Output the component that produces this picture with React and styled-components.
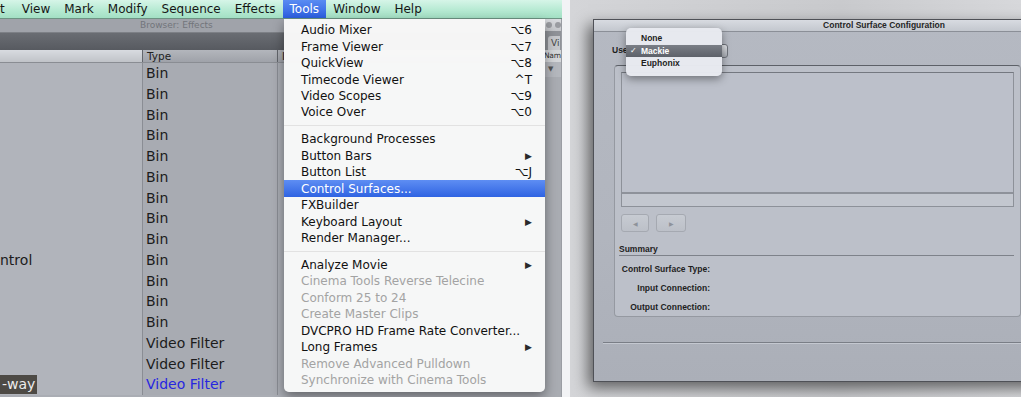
import styled, { createGlobalStyle } from 'styled-components';

const GlobalStyle = createGlobalStyle`
  html, body { margin: 0; padding: 0; background: #f2f3f5; }
  body { font-family: "DejaVu Sans", sans-serif; }
`;

const menuTitles = ['t', 'View', 'Mark', 'Modify', 'Sequence', 'Effects', 'Tools', 'Window', 'Help'];

const toolsMenu = [
  { label: 'Audio Mixer', key: '⌥6' },
  { label: 'Frame Viewer', key: '⌥7' },
  { label: 'QuickView', key: '⌥8' },
  { label: 'Timecode Viewer', key: '^T' },
  { label: 'Video Scopes', key: '⌥9' },
  { label: 'Voice Over', key: '⌥0' },
  { sep: true },
  { label: 'Background Processes' },
  { label: 'Button Bars', sub: true },
  { label: 'Button List', key: '⌥J' },
  { label: 'Control Surfaces...', active: true },
  { label: 'FXBuilder' },
  { label: 'Keyboard Layout', sub: true },
  { label: 'Render Manager...' },
  { sep: true },
  { label: 'Analyze Movie', sub: true },
  { label: 'Cinema Tools Reverse Telecine', off: true },
  { label: 'Conform 25 to 24', off: true },
  { label: 'Create Master Clips', off: true },
  { label: 'DVCPRO HD Frame Rate Converter...' },
  { label: 'Long Frames', sub: true },
  { label: 'Remove Advanced Pulldown', off: true },
  { label: 'Synchronize with Cinema Tools', off: true },
];

const rows = [
  ...Array(13).fill('Bin').map((t, i) => ({ name: i === 9 ? 'ntrol' : '', type: t })),
  { name: '', type: 'Video Filter' },
  { name: '', type: 'Video Filter' },
  { name: '-way', type: 'Video Filter', picked: true },
];

const summary = ['Control Surface Type:', 'Input Connection:', 'Output Connection:'];

const App = () => (
  <>
    <GlobalStyle />
    <Page>
      <LeftShot>
        <MenuBar>
          {menuTitles.map((t) => (
            <MenuTitle key={t} open={t === 'Tools'} first={t === 't'}>{t}</MenuTitle>
          ))}
        </MenuBar>
        <Desk>
          <BrowserWindow>
            <BrowserTitle>Browser: Effects</BrowserTitle>
            <TabStrip />
            <HeaderRow>
              <HeadCell />
              <HeadCell dark>Type</HeadCell>
              <HeadCell dark>I</HeadCell>
            </HeaderRow>
            {rows.map((r, i) => (
              <Row key={i}>
                <NameCell>{r.name && <NameText picked={r.picked}>{r.name}</NameText>}</NameCell>
                <TypeCell picked={r.picked}>{r.type}</TypeCell>
                <RestCell />
              </Row>
            ))}
          </BrowserWindow>
          <SideWindow>
            <SideTitle><Dot /><Dot /></SideTitle>
            <SideTabs><SideTab>Vi</SideTab></SideTabs>
            <SideHead>Nam</SideHead>
            <SideRow>▼</SideRow>
            <SideFill />
          </SideWindow>
        </Desk>

        <Dropdown>
          {toolsMenu.map((m, i) =>
            m.sep ? (
              <Separator key={i} />
            ) : (
              <MenuItem key={i} active={m.active} off={m.off}>
                <span>{m.label}</span>
                {m.key && <Shortcut>{m.key}</Shortcut>}
                {m.sub && <SubArrow>▶</SubArrow>}
              </MenuItem>
            )
          )}
        </Dropdown>
      </LeftShot>

      <RightShot>
        <Dialog>
          <DialogTitle>Control Surface Configuration</DialogTitle>
          <PopupRow>
            <SmallLabel>Use:</SmallLabel>
            <PopupButton />
          </PopupRow>
          <GroupBox>
            <ListBox>
              <ListArea />
              <ListStrip />
            </ListBox>
            <ArrowRow>
              <ArrowButton w={28}>◀</ArrowButton>
              <ArrowButton w={30}>▶</ArrowButton>
            </ArrowRow>
            <SummaryHead>Summary</SummaryHead>
            <Fields>
              {summary.map((s) => (
                <Field key={s}><FieldLabel>{s}</FieldLabel></Field>
              ))}
            </Fields>
          </GroupBox>
          <Divider />
        </Dialog>

        <PopupMenu>
          <PopupItem>None</PopupItem>
          <PopupItem selected><Check>✓</Check>Mackie</PopupItem>
          <PopupItem>Euphonix</PopupItem>
        </PopupMenu>
      </RightShot>
    </Page>
  </>
);

const Page = styled.div`
  display: flex;
  gap: 8px;
  width: 1021px;
  height: 397px;
  overflow: hidden;
  background: #f2f3f5;
`;

/* ---------- left: Final Cut menu ---------- */

const LeftShot = styled.div`
  position: relative;
  width: 562px;
  flex-shrink: 0;
  display: flex;
  flex-direction: column;
  overflow: hidden;
`;

const MenuBar = styled.div`
  height: 19px;
  box-sizing: border-box;
  display: flex;
  background: linear-gradient(#d6f5e8, #b4e9d1 60%, #a3e0c4);
  border-bottom: 1px solid #6d9383;
  font-size: 12px;
  color: #161616;
`;

const MenuTitle = styled.div`
  display: flex;
  align-items: center;
  padding-left: ${(p) => (p.first ? '0' : '7px')};
  padding-right: ${(p) => (p.first ? '10px' : '7px')};
  background: ${(p) => (p.open ? 'linear-gradient(#5a8cf2, #2c5fe0)' : 'transparent')};
  color: ${(p) => (p.open ? '#fff' : 'inherit')};
`;

const Desk = styled.div`
  flex: 1;
  display: flex;
  min-height: 0;
`;

const BrowserWindow = styled.div`
  width: 545px;
  display: flex;
  flex-direction: column;
  background: #aaadb4;
`;

const BrowserTitle = styled.div`
  height: 13px;
  padding-left: 140px;
  font-size: 9px;
  line-height: 13px;
  color: #72757b;
  background: #a0a3aa;
`;

const TabStrip = styled.div`
  height: 18px;
  background: linear-gradient(#6a6d73, #575a60);
  border-top: 1px solid #7d8086;
  box-sizing: border-box;
`;

const HeaderRow = styled.div`
  height: 13px;
  display: grid;
  grid-template-columns: 142px 135px 1fr;
  border-bottom: 1px solid #8a8d93;
  box-sizing: border-box;
`;

const HeadCell = styled.div`
  font-size: 10.5px;
  line-height: 12px;
  padding-left: 4px;
  color: #222;
  background: ${(p) => (p.dark ? 'linear-gradient(#b3b6bc, #9fa2a9)' : 'linear-gradient(#d8dbe0, #c0c3c8)')};
  border-left: ${(p) => (p.dark ? '1px solid #63666c' : 'none')};
`;

const Row = styled.div`
  height: 20.75px;
  display: grid;
  grid-template-columns: 142px 135px 1fr;
  font-size: 14px;
  line-height: 20.75px;
  color: #1c1c1c;
`;

const NameCell = styled.div`
  background: #b1b4bb;
  overflow: hidden;
  white-space: nowrap;
`;

const NameText = styled.span`
  display: inline-block;
  padding: 0 ${(p) => (p.picked ? '2px' : '0')};
  background: ${(p) => (p.picked ? '#4d4a45' : 'transparent')};
  color: ${(p) => (p.picked ? '#ececec' : 'inherit')};
  line-height: 19px;
`;

const TypeCell = styled.div`
  background: #a8abb2;
  border-left: 1px solid #8a8d94;
  padding-left: 3px;
  color: ${(p) => (p.picked ? '#2626e0' : 'inherit')};
`;

const RestCell = styled.div`
  background: #a9acb3;
  border-left: 1px solid #8a8d94;
`;

const SideWindow = styled.div`
  width: 17px;
  display: flex;
  flex-direction: column;
  overflow: hidden;
  border-right: 1px solid #9a9da3;
`;

const SideTitle = styled.div`
  height: 12px;
  display: flex;
  align-items: center;
  gap: 3px;
  padding-left: 2px;
  background: linear-gradient(#d9dbdf, #c4c6ca);
`;

const Dot = styled.span`
  width: 6px;
  height: 6px;
  flex-shrink: 0;
  border-radius: 50%;
  background: #9a9ca1;
`;

const SideTabs = styled.div`
  height: 19px;
  display: flex;
  align-items: flex-end;
  background: #8f9298;
`;

const SideTab = styled.div`
  height: 14px;
  margin-left: 4px;
  padding-left: 3px;
  font-size: 9px;
  line-height: 14px;
  color: #444;
  background: #c6c8cc;
  border-radius: 3px 0 0 0;
  white-space: nowrap;
`;

const SideHead = styled.div`
  height: 12px;
  font-size: 7.5px;
  line-height: 12px;
  color: #333;
  background: #d4d6d9;
  white-space: nowrap;
  letter-spacing: -0.3px;
`;

const SideRow = styled.div`
  height: 15px;
  font-size: 7px;
  line-height: 15px;
  padding-left: 4px;
  color: #555;
  background: #b4b7bd;
`;

const SideFill = styled.div`
  flex: 1;
  background: #a9acb2;
`;

const Dropdown = styled.div`
  position: absolute;
  left: 284px;
  top: 19px;
  width: 261px;
  padding: 3px 0 4px;
  box-sizing: border-box;
  background: rgba(248, 248, 248, 0.98);
  border-radius: 0 0 5px 5px;
  box-shadow: 0 5px 12px rgba(0, 0, 0, 0.4);
  font-size: 12px;
`;

const MenuItem = styled.div`
  height: 16.45px;
  display: flex;
  align-items: center;
  justify-content: space-between;
  padding: 0 13px 0 17px;
  white-space: nowrap;
  color: ${(p) => (p.active ? '#fff' : p.off ? '#a3a3a3' : '#111')};
  background: ${(p) => (p.active ? 'linear-gradient(#5e8ef3, #2f63e2)' : 'transparent')};
`;

const Shortcut = styled.span`
  color: #111;
`;

const SubArrow = styled.span`
  font-size: 9px;
  color: #2a2a2a;
`;

const Separator = styled.div`
  height: 10.5px;
  display: flex;
  align-items: center;
  &::after {
    content: '';
    flex: 1;
    height: 1px;
    background: #e2e2e2;
  }
`;

/* ---------- right: control surface dialog ---------- */

const RightShot = styled.div`
  position: relative;
  flex: 1;
  overflow: hidden;
  padding: 19px 0 0 23px;
  background: linear-gradient(to right, #d4d5d8, #c9cacd 60%, #d7d8db);
  font-family: "Liberation Sans", Arial, sans-serif;
`;

const Dialog = styled.div`
  width: 582px;
  height: 363px;
  box-sizing: border-box;
  display: flex;
  flex-direction: column;
  border: 1px solid #4f5157;
  background: linear-gradient(#b5b9c2, #b1b5be 60%, #abafb8);
  box-shadow: -5px 6px 14px rgba(0, 0, 0, 0.55);
`;

const DialogTitle = styled.div`
  height: 12px;
  box-sizing: border-box;
  border-bottom: 1px solid #8b8f97;
  background: linear-gradient(#d8dbe1, #c3c7ce);
  font-size: 8.5px;
  font-weight: bold;
  line-height: 11px;
  text-align: center;
  color: #262626;
`;

const PopupRow = styled.div`
  height: 33px;
  box-sizing: border-box;
  display: flex;
  align-items: flex-start;
  padding: 12px 0 0 18px;
`;

const SmallLabel = styled.span`
  font-size: 8.5px;
  font-weight: bold;
  line-height: 12px;
  color: #1e1e1e;
`;

const PopupButton = styled.div`
  width: 94px;
  height: 12px;
  margin-left: 2px;
  border-radius: 3px;
  border: 1px solid #6f737b;
  background: linear-gradient(#e2e4e8, #a7abb3);
`;

const GroupBox = styled.div`
  width: 407px;
  height: 252px;
  margin-left: 20px;
  box-sizing: border-box;
  padding: 6px 0 0 6px;
  border: 1px solid #9599a1;
  border-top-color: #5d6168;
  border-radius: 4px;
  background: #bcc0c9;
  display: flex;
  flex-direction: column;
`;

const ListBox = styled.div`
  width: 391px;
  display: flex;
  flex-direction: column;
  border: 1px solid #8d9199;
  border-top-color: #747880;
`;

const ListArea = styled.div`
  height: 119px;
  background: #bcc0ca;
  border-bottom: 2px solid #8e929a;
`;

const ListStrip = styled.div`
  height: 12px;
  background: #c3c7cf;
`;

const ArrowRow = styled.div`
  display: flex;
  gap: 7px;
  margin-top: 7px;
`;

const ArrowButton = styled.div`
  width: ${(p) => p.w}px;
  height: 18px;
  box-sizing: border-box;
  display: flex;
  align-items: center;
  justify-content: center;
  border: 1px solid #a5a9b1;
  border-radius: 3px;
  background: linear-gradient(#c7cbd2, #bcc0c8);
  font-size: 6px;
  color: #8e929a;
`;

const SummaryHead = styled.div`
  margin: 12px 6px 0 -2px;
  padding-bottom: 1px;
  border-bottom: 1px solid #7e828a;
  font-size: 8.5px;
  font-weight: bold;
  line-height: 10px;
  color: #1e1e1e;
`;

const Fields = styled.div`
  display: flex;
  flex-direction: column;
  margin-top: 3px;
`;

const Field = styled.div`
  height: 19px;
  display: flex;
  align-items: center;
`;

const FieldLabel = styled.span`
  width: 91px;
  margin-left: -2px;
  text-align: right;
  font-size: 8.5px;
  font-weight: bold;
  color: #1e1e1e;
  white-space: nowrap;
`;

const Divider = styled.div`
  height: 1px;
  margin: 25px 0 0 9px;
  background: #7a7e86;
  box-shadow: 0 1px 0 #c4c8d0;
`;

const PopupMenu = styled.div`
  position: absolute;
  left: 56px;
  top: 28px;
  width: 96px;
  height: 48px;
  box-sizing: border-box;
  padding-top: 4px;
  border-radius: 5px;
  background: rgba(232, 234, 240, 0.98);
  box-shadow: 0 3px 9px rgba(0, 0, 0, 0.4);
`;

const PopupItem = styled.div`
  height: 12.5px;
  display: flex;
  align-items: center;
  font-size: 8.5px;
  font-weight: bold;
  color: ${(p) => (p.selected ? '#fff' : '#1e1e1e')};
  background: ${(p) => (p.selected ? 'linear-gradient(#7a7e86, #5d6169)' : 'transparent')};
  padding-left: ${(p) => (p.selected ? '4px' : '15px')};
`;

const Check = styled.span`
  width: 11px;
  font-family: "DejaVu Sans", sans-serif;
  font-size: 8px;
`;

export default App;
